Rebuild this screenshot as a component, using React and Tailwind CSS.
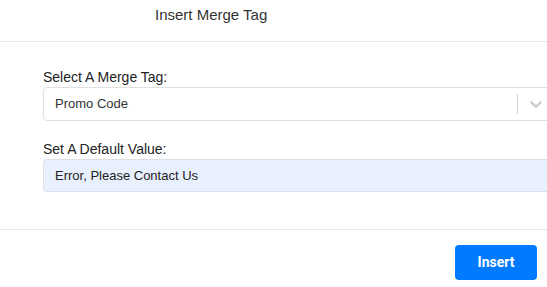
import React from "react";

function Chevron() {
  return (
    <svg width="20" height="20" viewBox="0 0 20 20" className="fill-[#cccccc]">
      <path d="M4.516 7.548c0.436-0.446 1.043-0.481 1.576 0l3.908 3.747 3.908-3.747c0.533-0.481 1.141-0.446 1.574 0 0.436 0.445 0.408 1.197 0 1.615-0.406 0.418-4.695 4.502-4.695 4.502-0.217 0.223-0.502 0.335-0.787 0.335s-0.57-0.112-0.789-0.335c0 0-4.287-4.084-4.695-4.502s-0.436-1.17 0-1.615z" />
    </svg>
  );
}

export default function App() {
  return (
    <div className="w-[547px] h-[287px] overflow-hidden bg-white font-['Liberation_Sans',Arial,sans-serif]">
      <div className="h-[42px] border-b border-[#e6e6e6] pl-[155px] pt-[3px]">
        <h2 className="text-[15px] leading-6 text-[#333]">Insert Merge Tag</h2>
      </div>

      <div className="pl-[43px] pt-[25px] pb-[37px]">
        <label className="block text-[14px] leading-5 text-[#222]">Select A Merge Tag:</label>
        <div className="w-[512px] h-[34px] flex items-center border border-[#e0e0e0] rounded-[4px] bg-white">
          <span className="flex-1 pl-[11px] text-[13px] text-[#333]">Promo Code</span>
          <span className="w-px h-[20px] bg-[#d6d6d6]" />
          <span className="px-[8px] flex items-center"><Chevron /></span>
        </div>

        <label className="block mt-[18px] text-[14px] leading-5 text-[#222]">Set A Default Value:</label>
        <div className="w-[512px] h-[33px] flex items-center border border-[#dcdfe6] rounded-[4px] bg-[#e8f0fe]">
          <span className="pl-[11px] text-[13px] text-[#222]">Error, Please Contact Us</span>
        </div>
      </div>

      <div className="border-t border-[#e6e6e6] flex justify-end pt-[15px] pr-[10px]">
        <button className="w-[82px] h-[35px] rounded-[4px] bg-[#007bff] text-white text-[14px] font-bold font-['Roboto',sans-serif]">Insert</button>
      </div>
    </div>
  );
}
